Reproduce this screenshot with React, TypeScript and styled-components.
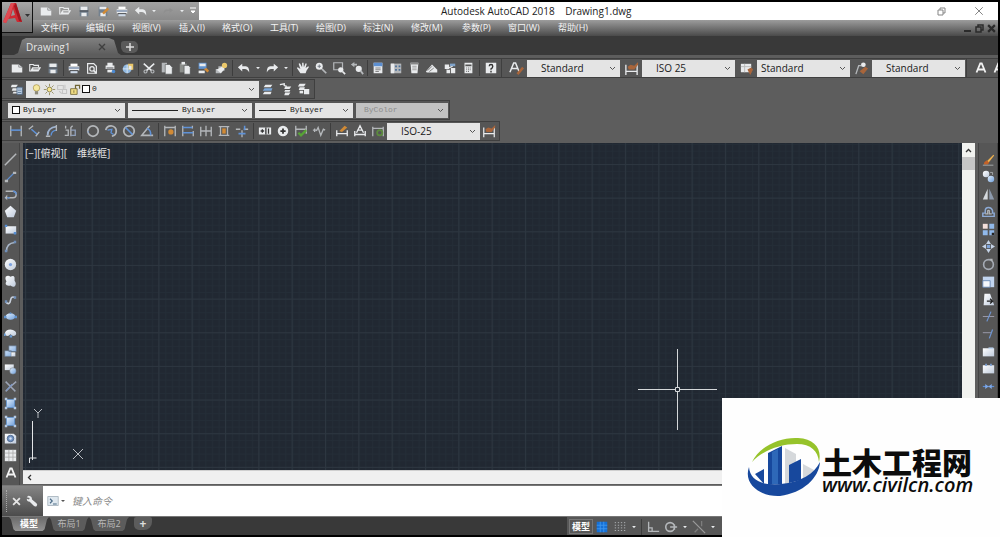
import React from "react";
import styled, { createGlobalStyle } from "styled-components";

const UI_FONT = `"Open Sans", "Noto Sans CJK SC", sans-serif`;

const GlobalStyle = createGlobalStyle`
  * { box-sizing: border-box; }
  body { margin: 0; background: #000; }
  button, select, input { font: inherit; color: inherit; margin: 0; padding: 0; border: 0; border-radius: 0; background: none; outline: none; }
  a { color: inherit; text-decoration: none; }
  svg { display: block; flex: none; }
`;

/* ---------- icons (16 x 16 grid) ---------- */

const W = "#e9ebed";
const G = "#b4b7ba";
const B = "#7ea3d8";
const D = "#3b3d40";
const O = "#d18a35";
const Y = "#eac76a";

const line = (d: string, stroke = G, width = 1.5) => (
  <path d={d} fill="none" stroke={stroke} strokeWidth={width} />
);

const ICONS: Record<string, React.ReactNode> = {
  newFile: <><path d="M2 4h8l4 3v6H2z" fill={W} /><path d="M10 4v3h4" fill="none" stroke="#8b8d90" /></>,
  open: <><path d="M2 12V4h4l1 1h5v2" fill="none" stroke={W} strokeWidth="1.3" /><path d="M5 7h10l-3 5H2z" fill={W} /><path d="M6 9h6" stroke="#777" /></>,
  save: <><path d="M3 3h10v11H3z" fill="#73818f" /><path d="M4 3h8v4H4z" fill={W} /><path d="M5 10h6v4H5z" fill={W} /><path d="M3 8h10" stroke={D} /></>,
  saveAs: <><path d="M3 3h10v11H3z" fill="#73818f" /><path d="M4 3h8v3H4zM5 10h6v4H5z" fill={W} /><path d="M7 10l6-6 2 2-6 6z" fill={O} /></>,
  print: <><path d="M4 3h8v3H4z" fill="#fff" /><path d="M2 6h12v5H2z" fill={W} /><path d="M2 8h12" stroke="#6e86a5" strokeWidth="1.5" /><path d="M4 11h8v3H4z" fill="#cdd9e8" /><path d="M3 11h10" stroke={D} /></>,
  preview: <><path d="M3 3h7l3 3v8H3z" fill="none" stroke={W} strokeWidth="1.4" /><circle cx="8" cy="9" r="2.5" fill="none" stroke={W} strokeWidth="1.4" /><path d="M10 11l3 3" stroke={W} strokeWidth="2" /></>,
  publish: <><path d="M5 2h6v3H5zM3 5h10v4H3z" fill={W} /><path d="M4 8h8" stroke={D} /><path d="M5 10h6v3H5z" fill={W} /><circle cx="12" cy="12" r="2" fill="#4c8bd4" /></>,
  dwf: <><circle cx="7" cy="9" r="5" fill="#91b8df" /><path d="M7 4v10M2 9h10" stroke="#dfe9f5" /><path d="M8 3h6v7H9z" fill={Y} /><path d="M9 5l3 1v4l-3-1z" fill={W} /></>,
  cut: <><path d="M2 3l9 8M14 3L5 11" stroke={W} strokeWidth="1.8" /><circle cx="4" cy="12" r="1.7" fill="none" stroke={G} strokeWidth="1.3" /><circle cx="12" cy="12" r="1.7" fill="none" stroke={G} strokeWidth="1.3" /></>,
  copyClip: <><path d="M2 2h6v11H2z" fill={G} /><path d="M6 4h5l3 3v8H6z" fill={W} stroke={D} strokeWidth=".6" /></>,
  paste: <><path d="M2 3h8v10H2z" fill="#8b8e8b" /><path d="M4 1h4v3H4z" fill={W} /><path d="M7 5h5l2 2v8H7z" fill={W} stroke={D} strokeWidth=".6" /></>,
  match: <><path d="M3 2h9v7H3z" fill="#5f92cf" /><path d="M4 3h7v3H4z" fill={W} /><path d="M3 11h7v3H3z" fill={W} /><path d="M9 9l4 4 2-2-3-3z" fill={O} /></>,
  block: <><path d="M2 9h6v5H2zM5 6h7v5H5z" fill={G} /><path d="M3 10l7-4 2 3-4 5z" fill={W} /><circle cx="12" cy="5" r="3" fill={Y} /></>,
  undo: <path d="M1 7l5-4v3h4q4 0 4 7-2-4-5-4H6v3z" fill={W} />,
  redo: <path d="M15 7l-5-4v3H6q-4 0-4 7 2-4 5-4h3v3z" fill={W} />,
  redoOff: <path d="M15 7l-5-3v2H6q-4 0-4 6 2-4 5-4h3v2z" fill="#8f8f8f" />,
  down: <path d="M3 5h10l-5 6z" fill={W} />,
  hand: <path d="M5 14L1 8l1-1 3 2-2-6 1.500-.5L7 7V2h1.600l.4 5 2-4.500 1.300.5L11 8l3-2 .8.8L12 11l-1 3z" fill={W} />,
  zoom: <><circle cx="6" cy="6" r="4" fill={W} /><path d="M4 6h4M6 4v4" stroke="#69717a" /><path d="M9 9l5 5" stroke={G} strokeWidth="2" /></>,
  zoomWin: <><path d="M2 2h10v8H2z" fill="none" stroke={G} strokeWidth="1.4" /><circle cx="10" cy="10" r="3" fill={W} /><path d="M12 12l3 3" stroke={W} strokeWidth="2" /></>,
  zoomPrev: <><path d="M1 4l4-3v2h3v2H5v2z" fill={G} /><circle cx="10" cy="9" r="3.500" fill={W} /><path d="M12 11l3 4" stroke={G} strokeWidth="2" /></>,
  props: <><path d="M3 2h10v12H3z" fill={W} /><path d="M3 2h10v4H3z" fill="#5c8fd1" /><path d="M5 8h6M5 10h6M5 12h4" stroke="#777" /></>,
  center: <><path d="M2 3h12v11H2z" fill={G} /><path d="M2 3h4v11H2z" fill={W} /><path d="M7 5h2v2H7zM11 5h2v2h-2zM7 9h2v2H7zM11 9h2v2h-2z" fill="#4c6f97" /></>,
  palette: <><path d="M4 2h9l-1 12H5z" fill={W} /><path d="M4 2h9v2H4z" fill="#888" /><path d="M6 6h5M6 8h5M6 10h5" stroke="#999" /></>,
  sheet: <><path d="M1 12l7-8 6 6v3H2z" fill={W} /><path d="M3 11l5-5M5 12l5-4" stroke="#777" /></>,
  markup: <><path d="M2 4h5v5H2zM9 8h5v6H9zM4 10h4v4H4z" fill={W} /><path d="M8 3h6v3H8z" fill="#7fa3ca" /><path d="M4 9l7-3" stroke={W} strokeWidth="1.5" /></>,
  calc: <><path d="M4 2h9v12H4z" fill={W} /><path d="M5 4h7v2H5z" fill="#555" /><path d="M6 8h1M8 8h1M10 8h1M6 10h1M8 10h1M10 10h1M6 12h1M8 12h1" stroke="#555" /></>,
  help: <><path d="M2 2h12v12H2z" fill={W} /><path d="M6 6q0-2 2-2t2 2-2 3v1M8 11v2" fill="none" stroke="#333" strokeWidth="1.6" /></>,
  textStyle: <><path d="M1 12L5 2h2l4 10M3 8h6" fill="none" stroke={W} strokeWidth="1.6" /><path d="M8 13l6-7 2 2-6 7z" fill="#a8653b" /></>,
  dimStyle: <><path d="M2 4v11M14 4v11M2 11h12" fill="none" stroke={W} strokeWidth="1.4" /><path d="M4 6l3-2 4 1 4-4v3l-4 5H5z" fill="#a8653b" /></>,
  tableStyle: <><path d="M2 3h11v9H2z" fill={W} /><path d="M2 6h11M6 3v9" stroke="#bbb" /><path d="M9 9l4-2 2 2-3 6z" fill="#a8653b" /></>,
  leaderStyle: <><path d="M2 14L5 5h3" fill="none" stroke={G} strokeWidth="1.4" /><circle cx="10" cy="4" r="2.500" fill={W} /><path d="M6 11l6-5 3 2-5 6z" fill="#a8653b" /></>,
  bigA: <path d="M2 14L7 2h2l5 12M4 10h8" fill="none" stroke="#f2f2f2" strokeWidth="2.400" />,
  layers: <><path d="M2 3h7l-2 3H1zM3 7h6l-1 3H2zM4 11h5v2H3z" fill={W} /><path d="M8 6h6v8H8z" fill="#d8e4f2" stroke="#4b6787" /><path d="M9 8h4M9 10h4M9 12h4" stroke="#5c7a9c" /></>,
  layerCur: <><path d="M5 3h8l-2 3H3z" fill={W} /><path d="M4 7h9l-1 3H2z" fill="#79a6d8" /><path d="M4 11h8l-1 3H2z" fill={W} /></>,
  layerPrev: <><path d="M1 3l5-1v2l3 1" fill="none" stroke={W} strokeWidth="1.5" /><path d="M7 5h7l-2 3H6zM7 9h6l-1 2H6zM7 12h6l-2 3H6z" fill={W} /></>,
  layerState: <><path d="M3 2h7l-2 3H1zM3 6h6l-1 3H2z" fill={W} /><path d="M8 8h6v6H8z" fill={W} /><path d="M3 10h4v3H3z" fill={W} /></>,
  bulb: <><circle cx="8" cy="6" r="4" fill="#f6e9a0" stroke="#a08a3c" strokeWidth=".8" /><path d="M6 10h4v4H6z" fill="#8f8b7a" /></>,
  sun: <><circle cx="8" cy="8" r="3" fill="#f6e58f" stroke="#7d7444" /><path d="M8 1v3M8 12v3M1 8h3M12 8h3M3 3l2 2M11 11l2 2M13 3l-2 2M5 11l-2 2" stroke="#8b8350" /></>,
  vpFreeze: <path d="M2 3h7v5H2zM8 8h5v5H8zM11 2v5M4 10l3 3" fill="none" stroke="#c4c4c4" strokeWidth="1.3" />,
  lock: <><path d="M2 7h8v7H2z" fill="#f0dc83" stroke="#6f6434" /><path d="M8 7V3h5v4" fill="none" stroke="#6f6434" strokeWidth="1.5" /><path d="M6 9v3" stroke="#6f6434" /></>,
  dimLinear: <>{line("M2 2v12M14 2v12")}{line("M2 7h12", "#5f92d8", 1.8)}</>,
  dimAligned: <>{line("M5 6l7 6", "#5f92d8", 1.8)}{line("M2 6l5-4M10 14l4-5")}</>,
  dimArc: <>{line("M3 13Q3 4 13 3", "#9fb3d0", 2)}{line("M7 13q0-5 6-6", "#5f92d8")}{line("M1 14h5M13 1v7")}</>,
  dimOrd: <>{line("M3 2v3M3 7h3v6H2M9 14V4l2-2")}{line("M9 7h5v6H9", "#8f9fba")}</>,
  dimRadius: <><circle cx="8" cy="8" r="6" fill="none" stroke={G} strokeWidth="2" />{line("M2 9h1", "#5f92d8")}</>,
  dimJog: <>{line("M2 7q1-5 6-5 6 1 6 6 0 5-5 6", G, 2)}{line("M4 7l5-1-1 4 3 2", "#5f92d8")}</>,
  dimDia: <><circle cx="8" cy="8" r="6" fill="none" stroke={G} strokeWidth="2" />{line("M4 4l8 8", "#5f92d8", 2)}</>,
  dimAng: <>{line("M11 2L2 13h13", G, 1.8)}{line("M8 5q5 2 4 8", "#5f92d8", 1.8)}</>,
  dimQuick: <>{line("M2 2v12M14 2v12M2 4h12")}<circle cx="9" cy="9" r="3" fill={O} /></>,
  dimBase: <>{line("M2 2v12M13 2v3M14 8v6")}{line("M2 4h11M2 10h12", "#5f92d8", 1.8)}</>,
  dimCont: <>{line("M2 3v11M8 2v12M14 3v11M2 8h12")}</>,
  dimSpace: <>{line("M2 3h12M2 13h12M4 3v10M12 3v10")}<path d="M6 5h4v6H6z" fill={O} /></>,
  dimBreak: <>{line("M1 6h5M10 6h5M8 7v8")}{line("M4 11h8M11 2v5", "#5f92d8", 1.8)}</>,
  tolerance: <><path d="M1 4h14v8H1z" fill={W} /><path d="M3 8h4M5 6v4M12 5v6M9 4v8" stroke="#333" strokeWidth="1.500" /></>,
  centerMark: <><circle cx="8" cy="8" r="6" fill={W} /><path d="M8 5v6M5 8h6" stroke="#333" strokeWidth="2" /></>,
  inspect: <>{line("M2 2v12M14 2v9M2 6h12")}{line("M5 10l3 3 6-6", "#57a335", 2.500)}</>,
  jogLine: <>{line("M1 7h4M3 5v4M5 8l2-4 3 9 3-7 2 1")}</>,
  dimEdit: <>{line("M2 7v7M14 7v7M2 11h12", W)}<path d="M5 8l6-6 3 2-6 5z" fill={O} /></>,
  dimText: <>{line("M2 8v6M14 8v6M2 12h12M4 10l4-8 4 8M6 7h4", W, 1.5)}</>,
  dimUpdate: <>{line("M2 3v11M14 3v11M2 5h12")}<circle cx="10" cy="10" r="3" fill="none" stroke="#5c8a3e" strokeWidth="2" /></>,
  line: line("M1 15L15 1", "#b4b7ba", 1.8),
  xline: <>{line("M3 13L12 4", "#5f8fd0")}<path d="M1 12h4v3H1zM11 2h4v3h-4z" fill={G} /></>,
  pline: <>{line("M2 4h9q4 0 4 4t-4 4H5", G, 1.8)}{line("M1 12h6M11 4q4 0 4 4", "#5f8fd0", 1.8)}<path d="M4 8l-3 4 3 3z" fill={G} /></>,
  polygon: <path d="M8 1l7 6-3 8H4L1 7z" fill="url(#paper)" />,
  rect: <><path d="M2 4h13v9H2z" fill="url(#paper)" /><path d="M1 2h3v3H1zM12 11h3v3h-3z" fill="#578ed2" /></>,
  arc: <>{line("M3 14Q3 4 13 3", "#a8b6c8", 1.8)}<path d="M1 12h3v3H1zM12 1h3v3h-3z" fill="#6f8fba" /></>,
  circle: <><circle cx="8" cy="8" r="7" fill="url(#paper)" /><circle cx="8" cy="8" r="2" fill="#7ea3e0" /></>,
  cloud: <path d="M2 2q3-2 6 0 4-2 5 1v4q3 4 0 7-3 1-5-1-5 1-6-2 0-2 1-3-2-3-1-6z" fill="url(#paper)" />,
  spline: <>{line("M2 11q5 5 6-2 1-6 6-3", "#c8d0dc", 2)}<path d="M1 9h3v3H1zM12 4h3v3h-3z" fill="#6f8fba" /></>,
  ellipse: <><ellipse cx="8" cy="8" rx="6" ry="4" fill="url(#sky)" /><path d="M0 7h3v3H0zM13 7h3v3h-3zM7 3h2v2H7z" fill="#5f93cf" /></>,
  ellArc: <><path d="M1 8q1-5 7-5 7 1 7 5 0 3-4 3l-3-2-3 2q-4 0-4-3z" fill="url(#paper)" /><path d="M7 10h3v3H7zM0 8h2v3H0z" fill="#679bd5" /></>,
  insert: <><path d="M6 1h9v7H6zM1 7h8v7H1z" fill="url(#sky)" stroke="#5d6f86" strokeWidth=".8" /><path d="M9 9h5v5H9z" fill="url(#paper)" /></>,
  makeBlock: <><path d="M1 3h11v7H1z" fill="url(#paper)" /><circle cx="11" cy="11" r="4" fill="url(#sky)" stroke="#666" strokeWidth=".5" /></>,
  point: <>{line("M2 2l6 6 7-6M8 8l-6 6M8 8l6 6", "#9ca4b5", 1.8)}{line("M3 13l7-8", "#7a96c6")}</>,
  hatch: <><path d="M3 3h10v10H3z" fill="url(#sky)" stroke="#5c91d0" /><path d="M1 1h3v3H1zM12 1h3v3h-3zM1 12h3v3H1zM12 12h3v3h-3z" fill="#b6cae3" /></>,
  region: <><path d="M1 2h11l3 3v9H1z" fill="url(#paper)" /><circle cx="8" cy="8" r="4" fill="#7194c4" stroke="#455e82" /><circle cx="8" cy="8" r="1.500" fill="#d5e3f5" /></>,
  table: <><path d="M1 1h14v14H1z" fill={W} /><path d="M1 5h14M1 10h14M6 1v14M11 1v14" stroke="#aaa" /></>,
  erase: <><path d="M6 10L14 2l1 1-7 9z" fill="#f0b24e" /><path d="M3 11l3-2 3 3-2 2H2z" fill="#c36228" /><path d="M1 15h13" stroke={G} /></>,
  copy: <><circle cx="5" cy="5" r="4" fill="url(#paper)" /><circle cx="11" cy="11" r="4" fill="url(#sky)" /><path d="M10 3h3v3" fill="none" stroke={G} /></>,
  mirror: <><path d="M7 1v13H1z" fill="#d5d9dd" /><path d="M9 1v13h6z" fill="#8d9aad" /></>,
  offset: <>{line("M1 14h14v-4h-2V7q-1-4-5-4T4 7v3H1z", "#8daad5", 1.8)}{line("M4 11h3V7q1-1 2 0v4h3", G)}</>,
  array: <><path d="M1 1h6v6H1z" fill="#f2dfda" /><path d="M9 1h6v6H9zM1 9h6v6H1zM9 9h6v6H9z" fill="#91b9ea" /><path d="M12 12h3v3h-3z" fill="#222" /></>,
  move: <><path d="M8 0l3 5H5zM8 16l3-5H5zM0 8l5-3v6zM16 8l-5-3v6z" fill="#c5d3e6" /><path d="M6 6h4v4H6z" fill={B} /></>,
  rotate: <><circle cx="8" cy="8" r="6" fill="none" stroke="#a5abb4" strokeWidth="2" /><path d="M9 1h4v4z" fill={G} /></>,
  scale: <><path d="M1 2h14v13H1z" fill="#c2d5ef" /><path d="M1 7h9v8H1z" fill="#f4f7fb" stroke="#5d7fae" /></>,
  stretch: <><path d="M3 1h7l5 14H2z" fill="url(#paper)" /><path d="M6 10h7M10 7l3 3-3 3" stroke="#222" fill="none" strokeWidth="1.6" /></>,
  trim: <>{line("M1 8h14", "#99a", 1.2)}{line("M6 14l5-12", "#6f95d2")}</>,
  extend: <>{line("M1 7h10", "#99a", 1.2)}{line("M9 14l4-11", "#6f95d2")}</>,
  breakAt: <><path d="M1 4h14v10H1z" fill="url(#paper)" /><path d="M8 3h6v2H8z" fill="#bdd4f0" /></>,
  breakGap: <><path d="M1 4h14v10H1z" fill="url(#paper)" /><path d="M4 2h2v3H4zM10 2h2v3h-2z" fill={B} /></>,
  join: <>{line("M1 8h14", "#5f8fd8")}<path d="M4 5l4 3-4 3zM12 5L8 8l4 3z" fill="#7ea9e8" /></>,
  chamfer: <><path d="M3 3h7l4 4v7H3z" fill="url(#paper)" />{line("M9 3l5 5", O)}</>,
  gridOn: <><path d="M2 2h12v12H2z" fill="#1570d6" /><path d="M6 2v12M10 2v12M2 6h12M2 10h12" stroke="#3f97ee" /></>,
  snap: <path d="M2 3h12M2 6h12M2 9h12M2 12h12" stroke={G} strokeDasharray="1.500 2" />,
  ortho: line("M3 2v11h12M3 9h4v4"),
  polar: <><circle cx="7" cy="8" r="5" fill="none" stroke={G} strokeWidth="1.800" />{line("M7 8h8M7 8h5M12 5v6")}</>,
  osnap: <>{line("M1 1l14 14", "#9a9a9a")}{line("M11 1v6M3 14l4-4", "#7d7d7d")}</>,
  wrench: <path d="M1 3l2-2q5 0 5 5l6 5q2 2 0 4-2 1-4-1L5 9Q1 9 1 5l3 1 1-2z" fill={W} />,
  prompt: <><path d="M1 2h14v12H1z" fill="#dfe8ef" stroke="#9eabb6" /><path d="M4 5l3 3-3 3M8 12h5" fill="none" stroke="#4b6a86" strokeWidth="1.500" /></>,
};

const Icon = ({ name, size = 14 }: { name: string; size?: number }) => (
  <svg width={size} height={size} viewBox="0 0 16 16" aria-hidden="true">{ICONS[name]}</svg>
);

/* ---------- frame ---------- */

const Window = styled.div`
  position: relative;
  display: flex;
  flex-direction: column;
  height: 100vh;
  padding: 2px;
  overflow: hidden;
  background: #000;
  color: #e6e6e6;
  font: 10px/14px ${UI_FONT};
`;

const Header = styled.header`
  display: flex;
  background: #4e4e4e;
`;

const AppButton = styled.button`
  display: flex;
  align-items: center;
  align-self: flex-start;
  width: 31px;
  height: 31px;
  flex: none;
  background: linear-gradient(#a8a8a8, #6e6e6e);
  border-right: 1px solid #111;
  border-bottom: 1px solid #111;
`;

const HeaderMain = styled.div`
  flex: 1;
  min-width: 0;
`;

const TitleBar = styled.div`
  display: flex;
  align-items: center;
  height: 18px;
  background: #fff;
`;

const QuickAccess = styled.div`
  display: flex;
  align-items: center;
  width: 166px;
  height: 18px;
  padding-left: 3px;
  background: linear-gradient(#a2a2a2, #8a8a8a);
`;

const Title = styled.h1`
  flex: 1;
  margin: 0;
  padding-left: 242px;
  color: #222;
  font: 400 10px/18px ${UI_FONT};
  white-space: pre;
`;

const WindowButtons = styled.div`
  display: flex;
  gap: 28px;
  padding-right: 14px;
  color: #858585;
`;

const MenuBar = styled.nav`
  display: flex;
  align-items: center;
  height: 16px;
  padding-left: 8px;
  background: linear-gradient(#9c9c9c, #4a4a4a);
`;

const MenuLink = styled.a<{ $w: number }>`
  width: ${(p) => p.$w}px;
  color: #f4f4f4;
  font-size: 9px;
  line-height: 16px;
  white-space: nowrap;
`;

const ChildButtons = styled.div`
  display: flex;
  gap: 3px;
  margin-left: auto;
  padding-right: 2px;
  color: #2b2b2b;
`;

const PlainButton = styled.button`
  display: flex;
  align-items: center;
  justify-content: center;
`;

const FileTabs = styled.div`
  display: flex;
  align-items: flex-end;
  height: 19px;
  padding-left: 12px;
  background: #393939;
`;

const FileTab = styled.div`
  display: flex;
  align-items: center;
  justify-content: space-between;
  width: 107px;
  height: 17px;
  padding: 0 15px 0 12px;
  background: linear-gradient(#808080, #5c5c5c);
  clip-path: polygon(0 100%, 4px 88%, 8px 12%, 12px 0, 95px 0, 100px 12%, 104px 88%, 100% 100%);
`;

const TabClose = styled(PlainButton)`
  color: #3f3f3f;
`;

const AddTab = styled.button`
  display: flex;
  align-items: center;
  justify-content: center;
  width: 17px;
  height: 12px;
  margin: 0 0 2px;
  border-radius: 3px 5px 5px 6px;
  background: #5a5a5a;
  color: #ddd;
`;

/* ---------- toolbars ---------- */

const ToolArea = styled.div`
  display: flex;
  flex-direction: column;
  gap: 1px;
  padding: 3px 0 2px;
  background: #5d5d5d;
`;

const ToolRow = styled.div`
  display: flex;
  overflow: hidden;
`;

const ToolBar = styled.div<{ $left?: number; $gap?: number }>`
  display: flex;
  flex: none;
  align-items: center;
  gap: ${(p) => p.$gap ?? 0}px;
  height: 20px;
  padding: 0 1px 0 ${(p) => p.$left ?? 5}px;
  border: solid #3f3f3f;
  border-width: 1px 1px 1px 0;
  background: #565656;
`;

const ToolButton = styled.button<{ $w?: number }>`
  display: flex;
  flex: none;
  align-items: center;
  justify-content: center;
  width: ${(p) => p.$w ?? 18}px;
  height: 18px;
`;

const Separator = styled.i<{ $w?: number }>`
  flex: none;
  width: 1px;
  height: 16px;
  margin: 0 ${(p) => ((p.$w ?? 3) - 1) / 2}px;
  background: #3d3d3d;
`;

const Combo = styled.label<{ $w: number; $h?: number; $off?: boolean }>`
  display: flex;
  flex: none;
  align-items: center;
  width: ${(p) => p.$w}px;
  height: ${(p) => p.$h ?? 17}px;
  padding: 0 4px;
  background: ${(p) => (p.$off ? "#c2c2c2" : "#e4e4e4")};
  color: ${(p) => (p.$off ? "#8d8d8d" : "#202020")};
`;

const ComboSelect = styled.select<{ $pad: number; $mono?: boolean }>`
  flex: 1;
  min-width: 0;
  height: 100%;
  padding-left: ${(p) => p.$pad}px;
  appearance: none;
  opacity: 1;
  font: ${(p) => (p.$mono ? `8px/14px "Liberation Mono", monospace` : `10px/16px ${UI_FONT}`)};
`;

const Swatch = styled.i`
  width: 8px;
  height: 8px;
  border: 1px solid #111;
  background: #fff;
`;

const LineSample = styled.i<{ $w: number }>`
  width: ${(p) => p.$w}px;
  height: 1px;
  background: #222;
`;

const Chevron = () => (
  <svg width="7" height="5" viewBox="0 0 7 5" aria-hidden="true">
    <path d="M1 1l2.500 2.500L6 1" fill="none" stroke="#555" />
  </svg>
);

type PickerProps = {
  label: string; value: string; w: number; h?: number; pad?: number;
  mono?: boolean; off?: boolean; children?: React.ReactNode;
};

const Picker = ({ label, value, w, h, pad = 10, mono, off, children }: PickerProps) => (
  <Combo $w={w} $h={h} $off={off}>
    {children}
    <ComboSelect aria-label={label} $pad={pad} $mono={mono} disabled={off}>
      <option>{value}</option>
    </ComboSelect>
    <Chevron />
  </Combo>
);

/* A "|" is a divider and "v" a narrow drop-down arrow. */
const Tools = ({ names, sep }: { names: string[]; sep?: number }) => (
  <>
    {names.map((n, i) => {
      if (n === "|") return <Separator key={i} $w={sep} />;
      if (n === "||") return <Separator key={i} $w={5} />;
      if (n === "v") return <ToolButton key={i} $w={10} aria-label="more"><Icon name="down" size={6} /></ToolButton>;
      return <ToolButton key={i} aria-label={n}><Icon name={n} /></ToolButton>;
    })}
  </>
);

/* ---------- workspace ---------- */

const Body = styled.main`
  display: flex;
  flex: 1;
  min-height: 0;
  background: #5d5d5d;
`;

const SideBar = styled.div<{ $right?: boolean }>`
  display: flex;
  flex: none;
  flex-direction: column;
  justify-content: space-between;
  align-items: center;
  width: ${(p) => (p.$right ? 20 : 18)}px;
  padding: 8px 0 3px;
  margin: ${(p) => (p.$right ? "0 0 0 3px" : "0 3px 0 0")};
  border: solid #444;
  border-width: ${(p) => (p.$right ? "0 1px" : "0 1px 0 0")};
  background: #565656;
`;

const SideButton = styled.button`
  display: flex;
  align-items: center;
  justify-content: center;
  width: 17px;
  height: 17px;
`;

const ViewColumn = styled.div`
  display: flex;
  flex: 1;
  flex-direction: column;
  min-width: 0;
`;

const Canvas = styled.div`
  position: relative;
  flex: 1;
  min-height: 0;
  overflow: hidden;
  background: #212832;
`;

const Surface = styled.svg`
  position: absolute;
  inset: 0;
  width: 100%;
  height: 100%;
`;

const AxisMark = styled.svg`
  position: absolute;
  left: 0;
  bottom: 0;
`;

const ViewLabel = styled.button`
  position: absolute;
  top: 3px;
  left: 2px;
  color: #e4e4e4;
  font-size: 10px;
  line-height: 14px;
  white-space: pre;
`;

const ScrollX = styled.div`
  display: flex;
  align-items: center;
  height: 14px;
  margin-bottom: 1px;
  border-top: 1px solid #cfcfcf;
  background: #f0f0f0;
  color: #333;
`;

const ScrollY = styled.div`
  flex: none;
  width: 13px;
  margin-bottom: 15px;
  background: #f1f2ef;
  color: #333;
`;

const ScrollArrow = styled.button`
  display: flex;
  align-items: center;
  justify-content: center;
  width: 13px;
  height: 14px;
`;

const Thumb = styled.div`
  height: 13px;
  background: #c6c6c6;
`;

/* ---------- bottom ---------- */

const CommandLine = styled.div`
  display: flex;
  flex: none;
  height: 32px;
  border: solid #777;
  border-width: 1px 0;
  background: #fff;
`;

const CommandGrip = styled.div`
  display: flex;
  align-items: center;
  width: 41px;
  padding-left: 4px;
  gap: 5px;
  background: linear-gradient(#858585, #4b4b4b);
`;

const GripDots = styled.i`
  width: 1px;
  height: 22px;
  border-left: 1px dotted #aaa;
`;

const CommandField = styled.label`
  display: flex;
  flex: 1;
  align-items: center;
  gap: 1px;
  padding-left: 4px;
  color: #666;
`;

const CommandInput = styled.input`
  flex: 1;
  min-width: 0;
  padding-left: 5px;
  color: #444;
  font: italic 10px/16px ${UI_FONT};
  &::placeholder { color: #888; opacity: 1; }
`;

const StatusBar = styled.footer`
  display: flex;
  flex: none;
  align-items: flex-start;
  height: 18px;
  padding-left: 7px;
  background: #393939;
`;

const LayoutTab = styled.button<{ $on?: boolean }>`
  width: 40px;
  height: 14px;
  background: ${(p) => (p.$on ? "linear-gradient(#6a6a6a, #929292)" : "#5c5c5c")};
  color: ${(p) => (p.$on ? "#fff" : "#b8b8b8")};
  font-size: 9px;
  font-weight: ${(p) => (p.$on ? 700 : 400)};
  line-height: 14px;
  clip-path: polygon(0 0, 100% 0, 95% 18%, 89% 88%, 84% 100%, 16% 100%, 11% 88%, 5% 18%);
`;

const AddLayout = styled.button`
  width: 18px;
  height: 13px;
  margin-left: 5px;
  border-radius: 2px 2px 8px 5px;
  background: #5c5c5c;
  color: #ddd;
  font-size: 12px;
  font-weight: 700;
  line-height: 12px;
`;

const StatusTools = styled.div`
  display: flex;
  align-items: center;
  width: 431px;
  height: 18px;
  margin-left: auto;
  padding: 1px 0 0 2px;
  background: #575757;
`;

const ModelButton = styled.button`
  width: 24px;
  height: 15px;
  border: 1px solid #777;
  color: #fff;
  font-size: 9px;
  font-weight: 700;
  line-height: 13px;
`;

/* ---------- site badge over the lower right corner ---------- */

const Badge = styled.a`
  position: absolute;
  right: 0;
  bottom: 0;
  display: flex;
  align-items: center;
  width: 278px;
  height: 139px;
  padding: 0 0 4px 24px;
  background: #fefefe;
  color: #0c0c0c;
`;

const BadgeText = styled.span`
  display: flex;
  flex-direction: column;
  padding-top: 10px;
`;

const BadgeName = styled.strong`
  font: 900 30px/28px "Noto Sans CJK SC", sans-serif;
  white-space: nowrap;
`;

const BadgeUrl = styled.span`
  font: italic 600 20px/20px "Open Sans", sans-serif;
`;

const menus: [string, number][] = [
  ["文件(F)", 45], ["编辑(E)", 46], ["视图(V)", 47], ["插入(I)", 43], ["格式(O)", 48], ["工具(T)", 46],
  ["绘图(D)", 47], ["标注(N)", 48], ["修改(M)", 51], ["参数(P)", 46], ["窗口(W)", 50], ["帮助(H)", 40],
];

const standard = [
  "newFile", "open", "save", "|", "print", "preview", "publish", "dwf", "|", "cut", "copyClip", "paste", "match", "block",
  "||", "undo", "v", "redo", "v", "|", "hand", "zoom", "zoomWin", "zoomPrev", "|", "props", "center", "palette", "sheet",
  "markup", "calc", "||", "help",
];

const dimension = [
  "dimLinear", "dimAligned", "dimArc", "dimOrd", "|", "dimRadius", "dimJog", "dimDia", "dimAng", "|", "dimQuick", "dimBase",
  "dimCont", "dimSpace", "dimBreak", "|", "tolerance", "centerMark", "inspect", "jogLine", "|", "dimEdit", "dimText", "dimUpdate",
];

const draw = [
  "line", "xline", "pline", "polygon", "rect", "arc", "circle", "cloud", "spline", "ellipse", "ellArc", "insert", "makeBlock",
  "point", "hatch", "hatch", "region", "table", "bigA",
];

const modify = [
  "erase", "copy", "mirror", "offset", "array", "move", "rotate", "scale", "stretch", "trim", "extend", "breakAt", "breakGap",
  "join", "chamfer", "chamfer", "spline", "block", "layers",
];

const Cross = ({ size, width = 1 }: { size: number; width?: number }) => (
  <svg width={size} height={size} viewBox="0 0 8 8" aria-hidden="true">
    <path d="M1 1l6 6M7 1L1 7" stroke="currentColor" strokeWidth={width} />
  </svg>
);

const Restore = ({ width = 1 }: { width?: number }) => (
  <svg width="9" height="9" viewBox="0 0 9 9" aria-hidden="true">
    <path d="M1 3h5v5H1zM3 3V1h5v5H6" fill="none" stroke="currentColor" strokeWidth={width} />
  </svg>
);

export default function App() {
  return (
    <Window>
      <GlobalStyle />
      <svg width="0" height="0" style={{ position: "absolute" }} aria-hidden="true">
        <defs>
          <linearGradient id="paper" x2="1" y2="1"><stop stopColor="#fff" /><stop offset="1" stopColor="#bfcbdc" /></linearGradient>
          <linearGradient id="sky" x2="1" y2="1"><stop stopColor="#e3effc" /><stop offset="1" stopColor="#6f9fdb" /></linearGradient>
        </defs>
      </svg>

      <Header>
        <AppButton aria-label="Application menu">
          <svg width="30" height="30" viewBox="0 0 30 30" aria-hidden="true">
            <path d="M9 1h5l6 19h-5l-2-4-7 1-2 4-3-1z" fill="#cf2a33" />
            <path d="M9 1h3L8 14l-4 7-3-1z" fill="#e04a52" />
            <path d="M11 7l2 6-4 1z" fill="#989898" />
            <path d="M14 1l6 19-3-1-5-15z" fill="#a3161f" />
            <path d="M23 12h5l-2.500 3z" fill="#333" />
          </svg>
        </AppButton>
        <HeaderMain>
          <TitleBar>
            <QuickAccess>
              {["newFile", "open", "save", "saveAs", "print", "undo"].map((n) => (
                <ToolButton key={n} $w={19} aria-label={n}><Icon name={n} /></ToolButton>
              ))}
              <ToolButton $w={8} aria-label="undo list"><Icon name="down" size={6} /></ToolButton>
              <ToolButton $w={20} aria-label="redo"><Icon name="redoOff" size={12} /></ToolButton>
              <ToolButton $w={8} aria-label="redo list"><Icon name="down" size={6} /></ToolButton>
              <ToolButton $w={13} aria-label="customize">
                <svg width="8" height="8" viewBox="0 0 8 8" aria-hidden="true"><path d="M1 1h6M2 4h4L4 6z" fill="#fff" stroke="#fff" /></svg>
              </ToolButton>
            </QuickAccess>
            <Title>{"Autodesk AutoCAD 2018    Drawing1.dwg"}</Title>
            <WindowButtons>
              <PlainButton aria-label="Restore"><Restore /></PlainButton>
              <PlainButton aria-label="Close"><Cross size={10} width={0.8} /></PlainButton>
            </WindowButtons>
          </TitleBar>
          <MenuBar>
            {menus.map(([label, w]) => <MenuLink key={label} href="#" $w={w}>{label}</MenuLink>)}
            <ChildButtons>
              <PlainButton aria-label="Minimize drawing">
                <svg width="9" height="9" viewBox="0 0 9 9" aria-hidden="true"><path d="M1 7h7" stroke="currentColor" strokeWidth="2" /></svg>
              </PlainButton>
              <PlainButton aria-label="Restore drawing"><Restore width={1.5} /></PlainButton>
              <PlainButton aria-label="Close drawing"><Cross size={9} width={2} /></PlainButton>
            </ChildButtons>
          </MenuBar>
        </HeaderMain>
      </Header>

      <FileTabs>
        <FileTab>
          <span>Drawing1</span>
          <TabClose aria-label="Close tab"><Cross size={8} width={1.4} /></TabClose>
        </FileTab>
        <AddTab aria-label="New tab">
          <svg width="8" height="8" viewBox="0 0 8 8" aria-hidden="true"><path d="M4 0v8M0 4h8" stroke="currentColor" strokeWidth="1.5" /></svg>
        </AddTab>
      </FileTabs>

      <ToolArea>
        <ToolRow>
          <ToolBar $left={6}><Tools names={standard} /></ToolBar>
          <ToolBar $left={3}>
            <ToolButton $w={22} aria-label="Text style"><Icon name="textStyle" size={15} /></ToolButton>
            <Picker label="Text style" value="Standard" w={93} />
            <ToolButton $w={22} aria-label="Dimension style"><Icon name="dimStyle" size={15} /></ToolButton>
            <Picker label="Dimension style" value="ISO 25" w={93} />
            <ToolButton $w={22} aria-label="Table style"><Icon name="tableStyle" size={15} /></ToolButton>
            <Picker label="Table style" value="Standard" w={93} pad={0} />
            <ToolButton $w={22} aria-label="Leader style"><Icon name="leaderStyle" size={15} /></ToolButton>
            <Picker label="Leader style" value="Standard" w={93} />
          </ToolBar>
          <ToolBar $left={5}>
            <ToolButton aria-label="Multiline text"><Icon name="bigA" size={12} /></ToolButton>
            <ToolButton aria-label="Single line text"><Icon name="bigA" size={12} /></ToolButton>
          </ToolBar>
        </ToolRow>
        <ToolRow>
          <ToolBar $left={6}>
            <ToolButton aria-label="Layer properties"><Icon name="layers" /></ToolButton>
            <Picker label="Layer" value="0" w={233} pad={2} mono>
              <Icon name="bulb" size={13} /><Icon name="sun" size={13} /><Icon name="vpFreeze" size={13} /><Icon name="lock" size={13} />
              <Swatch />
            </Picker>
            <Tools names={["layerCur", "layerPrev", "layerState"]} />
          </ToolBar>
        </ToolRow>
        <ToolRow>
          <ToolBar $left={6} $gap={3}>
            <Picker label="Colour" value="ByLayer" w={117} h={15} pad={3} mono><Swatch /></Picker>
            <Picker label="Linetype" value="ByLayer" w={124} h={15} pad={4} mono><LineSample $w={46} /></Picker>
            <Picker label="Lineweight" value="ByLayer" w={98} h={15} pad={4} mono><LineSample $w={27} /></Picker>
            <Picker label="Plot style" value="ByColor" w={92} h={15} pad={4} mono off />
          </ToolBar>
        </ToolRow>
        <ToolRow>
          <ToolBar>
            <Tools names={dimension} sep={5} />
            <Picker label="Current dimension style" value="ISO-25" w={93} />
            <ToolButton aria-label="Edit dimension style"><Icon name="dimStyle" /></ToolButton>
          </ToolBar>
        </ToolRow>
      </ToolArea>

      <Body>
        <SideBar>
          {draw.map((n, i) => <SideButton key={i} aria-label={n}><Icon name={n} size={n === "bigA" ? 12 : 13} /></SideButton>)}
        </SideBar>
        <ViewColumn>
          <Canvas>
            <Surface aria-hidden="true">
              <defs>
                <pattern id="minor" width="6.667" height="6.730" x="2.200" y="1" patternUnits="userSpaceOnUse">
                  <path d="M.5 0v6.730M0 .5h6.667" stroke="#242d37" fill="none" />
                </pattern>
                <pattern id="major" width="33.330" height="33.650" x="2" y="21" patternUnits="userSpaceOnUse">
                  <path d="M.5 0v33.650M0 .5h33.330" stroke="#2d3640" fill="none" />
                </pattern>
              </defs>
              <rect width="100%" height="100%" fill="url(#minor)" />
              <rect width="100%" height="100%" fill="url(#major)" />
              <path d="M654.500 206v38M654.500 249v38M615 246.500h37M657 246.500h37" stroke="#d5d8da" />
              <path d="M652.500 244.500h4v4h-4z" fill="none" stroke="#d5d8da" />
            </Surface>
            <AxisMark width="70" height="70" viewBox="0 0 70 70" aria-hidden="true">
              <path d="M9.500 21v36M6.500 63v-5h7M9.500 60v-3" fill="none" stroke="#e4e6e8" />
              <path d="M11 9l4 4 4-4M15 13v5M50 49l10 10M60 49L50 59" fill="none" stroke="#b9bdc2" />
            </AxisMark>
            <ViewLabel>{"[−][俯视][\u3000维线框]"}</ViewLabel>
          </Canvas>
          <ScrollX>
            <ScrollArrow aria-label="Scroll left">
              <svg width="5" height="7" viewBox="0 0 5 7" aria-hidden="true"><path d="M4 1L1.500 3.500 4 6" fill="none" stroke="currentColor" strokeWidth="1.3" /></svg>
            </ScrollArrow>
          </ScrollX>
        </ViewColumn>
        <ScrollY>
          <ScrollArrow aria-label="Scroll up">
            <svg width="7" height="5" viewBox="0 0 7 5" aria-hidden="true"><path d="M1 4l2.500-2.500L6 4" fill="none" stroke="currentColor" strokeWidth="1.3" /></svg>
          </ScrollArrow>
          <Thumb />
        </ScrollY>
        <SideBar $right>
          {modify.map((n, i) => <SideButton key={i} aria-label={n}><Icon name={n} size={13} /></SideButton>)}
        </SideBar>
      </Body>

      <CommandLine>
        <CommandGrip>
          <GripDots />
          <PlainButton aria-label="Close command line"><Cross size={9} width={1.6} /></PlainButton>
          <PlainButton aria-label="Customize"><Icon name="wrench" size={12} /></PlainButton>
        </CommandGrip>
        <CommandField>
          <Icon name="prompt" size={12} />
          <svg width="6" height="4" viewBox="0 0 6 4" aria-hidden="true"><path d="M1 1h4L3 3z" fill="#555" /></svg>
          <CommandInput placeholder="键入命令" aria-label="Command" />
        </CommandField>
      </CommandLine>

      <StatusBar>
        <LayoutTab $on>模型</LayoutTab>
        <LayoutTab>布局1</LayoutTab>
        <LayoutTab>布局2</LayoutTab>
        <AddLayout aria-label="New layout">+</AddLayout>
        <StatusTools>
          <ModelButton>模型</ModelButton>
          <Tools names={["gridOn", "snap", "v", "||", "ortho", "polar", "v", "osnap", "v"]} />
        </StatusTools>
      </StatusBar>

      <Badge href="#" aria-label="www.civilcn.com">
        <svg width="76" height="64" viewBox="0 0 76 64" aria-hidden="true">
          <path d="M6 28C14 12 34 3 52 4c17 1 24 11 21 24-1-11-8-18-22-18C35 10 17 16 6 28z" fill="#96c32b" />
          <path d="M39 14l11 6v27l-11 3zM57 30l11 6v7l-11 4z" fill="#d5d8db" />
          <path d="M22 19l14-7v38l-14 1zM43 31l12-6v21l-12 3zM9 40l9-5v15z" fill="#17489d" />
          <path d="M26 18l6-3v35h-6z" fill="#2e68b8" />
          <path d="M3 33c1 14 15 19 32 17 20-2 33-10 39-22-1 16-17 31-40 34C14 63-3 50 3 33z" fill="#17489d" />
        </svg>
        <BadgeText>
          <BadgeName>土木工程网</BadgeName>
          <BadgeUrl>www.civilcn.com</BadgeUrl>
        </BadgeText>
      </Badge>
    </Window>
  );
}
